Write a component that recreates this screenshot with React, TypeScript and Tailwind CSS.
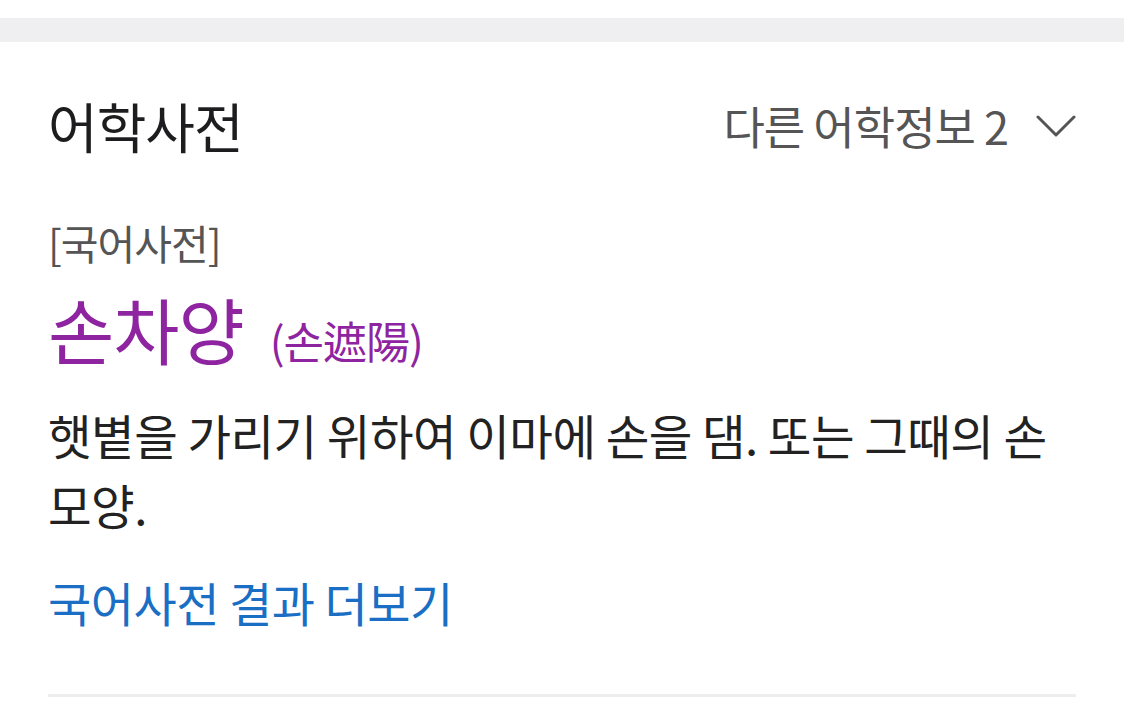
const font = { fontFamily: '"Noto Sans CJK KR", "Noto Sans", sans-serif' };

function Chevron() {
  return (
    <svg width="40" height="24" viewBox="0 0 40 24" fill="none" className="text-[#555]">
      <polyline points="2,3 20,21 38,3" stroke="currentColor" strokeWidth="3" strokeLinecap="round" strokeLinejoin="round" />
    </svg>
  );
}

function DictCard() {
  return (
    <section className="px-12 bg-white">
      {/* Header */}
      <div className="flex items-center justify-between pt-[52px] h-[116px]">
        <h2 className="text-[54px] leading-[64px] text-[#1d1d1f] tracking-[-1px]">어학사전</h2>
        <button className="flex items-center gap-[28px] text-[#555] text-[45px] leading-[56px] tracking-[-1px]">
          <span>다른 어학정보 2</span>
          <Chevron />
        </button>
      </div>

      {/* Entry */}
      <div className="mt-[60px] text-[41px] leading-[48px] text-[#555] tracking-[-1px]">[국어사전]</div>
      <div className="flex items-baseline gap-[26px] mt-[22px] text-[#8e24a0]">
        <span className="text-[72px] leading-[80px] tracking-[-1px]">손차양</span>
        <span className="text-[44px] tracking-[-1px]">(손遮陽)</span>
      </div>
      <p className="mt-[27px] text-[47.4px] leading-[70px] text-[#222] tracking-[-0.5px]">
        햇볕을 가리기 위하여 이마에 손을 댐. 또는 그때의 손 모양.
      </p>
      <a className="block mt-[34px] text-[47px] leading-[56px] text-[#1a6fc4] tracking-[-0.5px]">국어사전 결과 더보기</a>

      <div className="mt-[64px] h-[3px] bg-[#eeeeee]" />
    </section>
  );
}

export default function App() {
  return (
    <div className="w-[1124px] h-[716px] bg-white overflow-hidden" style={font}>
      <div className="h-[18px] bg-white" />
      <div className="h-[24px] bg-[#efeff1]" />
      <DictCard />
    </div>
  );
}
